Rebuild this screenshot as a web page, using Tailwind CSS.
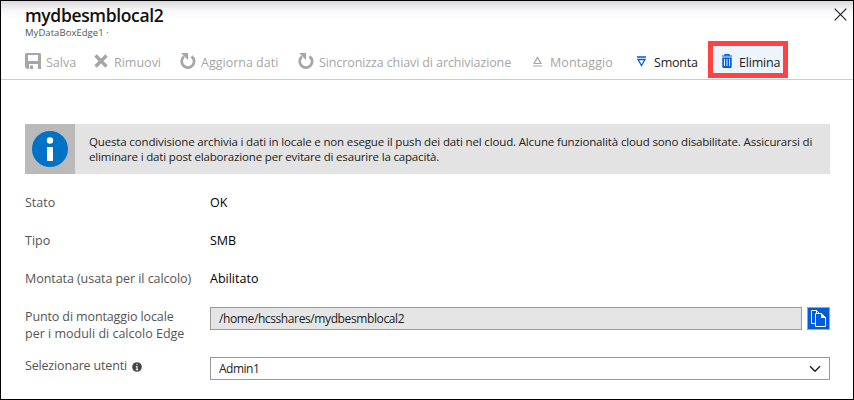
<!DOCTYPE html>
<html lang="it">
<head>
<meta charset="utf-8">
<title>mydbesmblocal2</title>
<script src="https://cdn.jsdelivr.net/npm/@tailwindcss/browser@4"></script>
</head>
<body class="w-[854px] h-[400px] overflow-hidden bg-white font-['Open_Sans','Noto_Sans',sans-serif] text-[12.5px] text-[#555]">
<div class="w-[854px] h-[400px] border border-black flex flex-col whitespace-nowrap">
  <header class="h-[42px] shrink-0 flex justify-between pl-6 pr-[6px] bg-linear-to-b from-[#d9d8db] via-[#f7f7f7] via-[9px] to-white to-[18px]">
    <div>
      <h1 class="h-[26px] leading-[28px] text-[17.5px] font-semibold text-[#111] tracking-[-0.35px]">mydbesmblocal2</h1>
      <p class="h-3 leading-[11px] text-[9.5px] text-[#555] tracking-[0.05px]">MyDataBoxEdge1 ·</p>
    </div>
    <svg class="w-[13px] h-[13px] mt-[7px]" viewBox="0 0 13 13" fill="none" stroke="#222" stroke-width="1.2"><path d="M.7.7l11.6 11.6M12.3.7L.7 12.3"/></svg>
  </header>
  <nav class="h-[37px] shrink-0 border-b border-[#ccc] flex items-start pl-6 pt-[10px] leading-[20px] text-[#a6a6a6]">
    <div class="w-[68px] flex"><svg class="w-4 h-4 mr-[5px]" viewBox="0 0 16 16" fill="#a6a6a6"><path fill-rule="evenodd" d="M1 0h14l1 1v15h-3v-5H4v5H2l-2-2V1zM3 2v6h10V2zM5 12.5h3V16H5z"/></svg><span>Salva</span></div>
    <div class="w-[87px] flex"><svg class="w-4 h-4 mr-[5px]" viewBox="0 0 16 16" fill="none" stroke="#a6a6a6" stroke-width="3.4"><path d="M2.5 2.5l11 11M13.5 2.5l-11 11"/></svg><span>Rimuovi</span></div>
    <div class="w-[118px] flex"><svg class="w-4 h-4 mr-[5px]" viewBox="0 0 16 16"><path d="M3.9 3.6A6.2 6.2 0 1 0 11.5 3.3" fill="none" stroke="#a6a6a6" stroke-width="2.7"/><path d="M1 0h7v7z" fill="#a6a6a6"/></svg><span>Aggiorna dati</span></div>
    <div class="w-[234px] flex"><svg class="w-4 h-4 mr-[5px]" viewBox="0 0 16 16"><path d="M3.9 3.6A6.2 6.2 0 1 0 11.5 3.3" fill="none" stroke="#a6a6a6" stroke-width="2.7"/><path d="M1 0h7v7z" fill="#a6a6a6"/></svg><span class="tracking-[-0.11px]">Sincronizza chiavi di archiviazione</span></div>
    <div class="w-[104px] flex"><svg class="w-[11px] h-[11px] mt-[3px] mr-[7px]" viewBox="0 0 11 11" fill="none" stroke="#a6a6a6"><path d="M2 7.5L5.5 1.5L9 7.5zM1 10h9" stroke-width="1.2"/></svg><span class="tracking-[0.1px]">Montaggio</span></div>
    <div class="w-[72px] flex text-[#222]"><svg class="w-[11px] h-[11px] mt-[3px] mr-[7px]" viewBox="0 0 11 11" fill="none" stroke="#015cda"><path d="M2 3.5L5.5 9.5L9 3.5zM1 1h9" stroke-width="1.3"/></svg><span class="tracking-[-0.2px]">Smonta</span></div>
    <div class="w-[80px] h-[37px] -mt-[12px] border-5 border-[#ff4343] bg-[#ecf4fe] flex text-[#222] pl-[9px] pt-[7px]"><svg class="w-[10px] h-[14px] mr-[7px] mt-[1px]" viewBox="0 0 10 14"><path d="M0 2h10M3 2V.7h4V2" fill="none" stroke="#015cda" stroke-width="1.2"/><path d="M.3 3.5h9.4V12.5Q9.7 14 8.2 14H1.8Q.3 14 .3 12.5z" fill="#015cda"/><path d="M2.5 5v7M5 5v7M7.5 5v7" stroke="#ecf4fe"/></svg><span class="tracking-[-0.2px]">Elimina</span></div>
  </nav>
  <main class="pl-6 pr-[23px] pt-[44px]">
    <section class="h-[50px] bg-[#e3e3e3] flex text-[#222]">
      <div class="w-[50px] shrink-0 bg-[#bababa] flex items-center justify-center"><svg class="w-9 h-9" viewBox="0 0 36 36"><circle cx="18" cy="18" r="18" fill="#0072c6"/><circle cx="18" cy="9.5" r="3.2" fill="white"/><path d="M15 16h6v14h-6z" fill="white"/></svg></div>
      <p class="pl-[14px] pt-[10px] text-[11.5px] leading-[15px]"><span class="tracking-[-0.15px]">Questa condivisione archivia i dati in locale e non esegue il push dei dati nel cloud. Alcune funzionalità cloud sono disabilitate. Assicurarsi di</span><br><span class="tracking-[-0.17px]">eliminare i dati post elaborazione per evitare di esaurire la capacità.</span></p>
    </section>
    <dl class="grid grid-cols-[185px_620px] grid-rows-[38px_38px_37px_50px_23px] pt-[20px] leading-[18px]">
      <dt>Stato</dt><dd class="text-black">OK</dd>
      <dt>Tipo</dt><dd class="text-black">SMB</dd>
      <dt class="tracking-[-0.06px]">Montata (usata per il calcolo)</dt><dd class="text-black">Abilitato</dd>
      <dt class="leading-[17px] pt-[1px]"><span class="tracking-[-0.12px]">Punto di montaggio locale</span><br><span>per i moduli di calcolo Edge</span></dt>
      <dd class="flex justify-between text-[#222]"><div class="w-[592px] h-[23px] border border-[#999] bg-[#e5e5e5] pl-[8px] leading-[21px] text-[12px] tracking-[-0.39px]">/home/hcsshares/mydbesmblocal2</div><button class="w-[23px] h-[23px] bg-[#015cda] flex"><svg class="w-[23px] h-[23px]" viewBox="0 0 23 23" fill="none" stroke="white"><path d="M.5.5h22v22H.5z" stroke-dasharray="1 1"/><path d="M8.5 16.5H4.5V3.5h5l3 3M9.5 3.5v3M8.5 6.5h6l4 4v9h-10zM14.5 6.5v4h4"/><path d="M14.5 6.5l4 4h-4z" fill="white"/></svg></button></dd>
      <dt class="flex"><span class="tracking-[-0.17px]">Selezionare utenti</span><svg class="w-[10px] h-[10px] ml-[5px] mt-[5px]" viewBox="0 0 10 10"><circle cx="5" cy="5" r="4.8" fill="#444"/><path d="M5 1.7v1.4M5 4v4M3.8 4.5H5M3.7 7.7h2.6" stroke="white" stroke-width="1.1"/></svg></dt>
      <dd class="h-[23px] border border-[#999] pl-[8px] pr-[8px] leading-[21px] text-[#222] flex justify-between items-center"><span class="text-[12px] tracking-[-0.5px]">Admin1</span><svg class="w-3 h-2" viewBox="0 0 12 8" fill="none" stroke="#222" stroke-width="1.5"><path d="M1 1.2l5 5 5-5"/></svg></dd>
    </dl>
  </main>
</div>
</body>
</html>
